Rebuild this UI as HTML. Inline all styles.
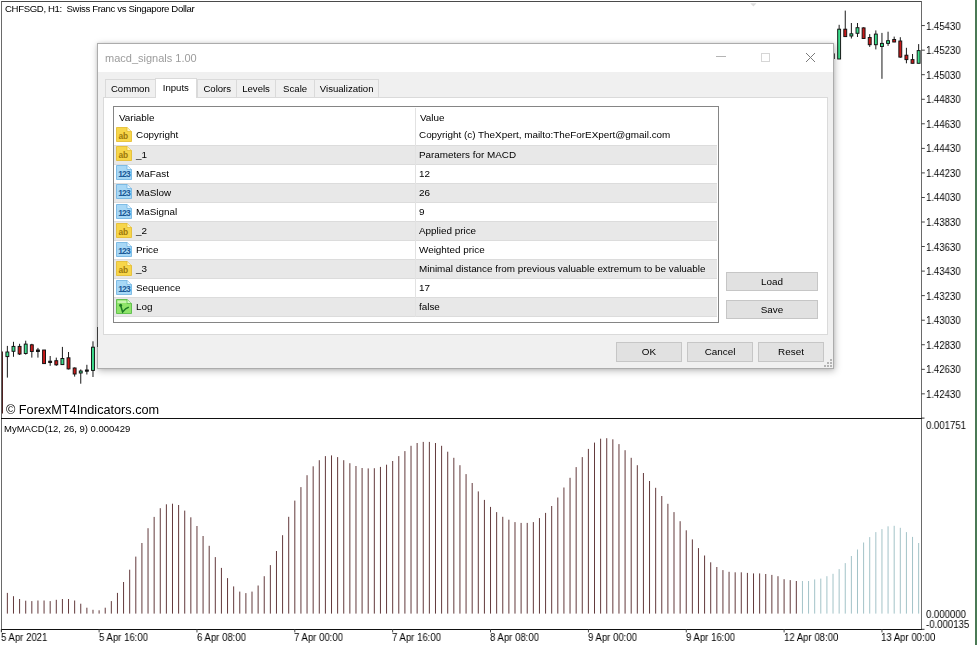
<!DOCTYPE html>
<html><head><meta charset="utf-8"><style>
*{box-sizing:border-box}
html,body{margin:0;padding:0;width:977px;height:645px;overflow:hidden;background:#fff;position:relative;font-family:"Liberation Sans",sans-serif}
.ax{position:absolute;font-size:10.3px;line-height:12px;color:#000;white-space:pre;transform:scaleX(0.93);transform-origin:0 0;will-change:transform}
.t{position:absolute;white-space:pre;line-height:1;will-change:transform}
#dlg{position:absolute;left:97px;top:43px;width:737px;height:325px;background:#f0f0f0;border:1px solid #9a9a9a;box-shadow:0 0 14px rgba(0,0,0,0.28)}
#title{position:absolute;left:0;top:0;width:735px;height:28px;background:#fff}
.tab{position:absolute;top:35.5px;height:19px;background:#f0f0f0;border:1px solid #d9d9d9;border-bottom:none;font-size:9.6px;color:#000;text-align:center;line-height:18px}
.tab.sel{top:34px;height:21px;background:#fff;border-color:#d9d9d9;z-index:2}
#panel{position:absolute;left:6px;top:53.5px;width:724px;height:238px;background:#fff;border:1px solid #d9d9d9}
#tbl{position:absolute;left:9px;top:9px;width:606px;height:216px;border:1px solid #828282;background:#fff;overflow:hidden}
.row{position:absolute;left:1px;width:602px;height:19.1px;font-size:9.9px;color:#000}
.row.g{background:#e9e9e9;border-top:1px solid #dadada;border-bottom:1px solid #dadada}
.btn{position:absolute;background:#e1e1e1;border:1px solid #adadad;font-size:9.9px;color:#000;text-align:center}

.d{position:absolute;z-index:10}
.ic{position:absolute;z-index:11}
.tab{will-change:transform;background:#f0f0f0;border:1px solid #dadada;border-bottom:none;font-size:9.6px;color:#000;text-align:center;z-index:11}
.rt{font-size:9.9px;color:#000;z-index:11}
.btn{will-change:transform;background:#e1e1e1;border:1px solid #c6c6c6;font-size:9.9px;color:#000;text-align:center;z-index:11}
</style></head><body>
<svg width="977" height="645" style="position:absolute;left:0;top:0"><rect x="6.86" y="592.9" width="1" height="20.7" fill="#633a3c"/><rect x="12.98" y="596.2" width="1" height="17.4" fill="#633a3c"/><rect x="19.09" y="599.0" width="1" height="14.6" fill="#633a3c"/><rect x="25.21" y="600.7" width="1" height="12.9" fill="#633a3c"/><rect x="31.32" y="601.1" width="1" height="12.5" fill="#633a3c"/><rect x="37.44" y="600.5" width="1" height="13.1" fill="#633a3c"/><rect x="43.56" y="600.5" width="1" height="13.1" fill="#633a3c"/><rect x="49.67" y="601.1" width="1" height="12.5" fill="#633a3c"/><rect x="55.79" y="599.8" width="1" height="13.8" fill="#633a3c"/><rect x="61.90" y="599.0" width="1" height="14.6" fill="#633a3c"/><rect x="68.02" y="599.0" width="1" height="14.6" fill="#633a3c"/><rect x="74.14" y="600.5" width="1" height="13.1" fill="#633a3c"/><rect x="80.25" y="603.7" width="1" height="9.9" fill="#633a3c"/><rect x="86.37" y="607.7" width="1" height="5.9" fill="#633a3c"/><rect x="92.48" y="609.8" width="1" height="3.8" fill="#633a3c"/><rect x="98.60" y="610.3" width="1" height="3.3" fill="#633a3c"/><rect x="104.72" y="607.7" width="1" height="5.9" fill="#633a3c"/><rect x="110.83" y="601.1" width="1" height="12.5" fill="#633a3c"/><rect x="116.95" y="592.9" width="1" height="20.7" fill="#633a3c"/><rect x="123.06" y="582.0" width="1" height="31.6" fill="#633a3c"/><rect x="129.18" y="569.7" width="1" height="43.9" fill="#633a3c"/><rect x="135.30" y="556.6" width="1" height="57.0" fill="#633a3c"/><rect x="141.41" y="543.0" width="1" height="70.6" fill="#633a3c"/><rect x="147.53" y="528.2" width="1" height="85.4" fill="#633a3c"/><rect x="153.64" y="516.9" width="1" height="96.7" fill="#633a3c"/><rect x="159.76" y="508.2" width="1" height="105.4" fill="#633a3c"/><rect x="165.88" y="504.3" width="1" height="109.3" fill="#633a3c"/><rect x="171.99" y="503.7" width="1" height="109.9" fill="#633a3c"/><rect x="178.11" y="505.0" width="1" height="108.6" fill="#633a3c"/><rect x="184.22" y="510.6" width="1" height="103.0" fill="#633a3c"/><rect x="190.34" y="517.3" width="1" height="96.3" fill="#633a3c"/><rect x="196.46" y="526.0" width="1" height="87.6" fill="#633a3c"/><rect x="202.57" y="536.0" width="1" height="77.6" fill="#633a3c"/><rect x="208.69" y="545.8" width="1" height="67.8" fill="#633a3c"/><rect x="214.80" y="557.1" width="1" height="56.5" fill="#633a3c"/><rect x="220.92" y="567.9" width="1" height="45.7" fill="#633a3c"/><rect x="227.04" y="578.1" width="1" height="35.5" fill="#633a3c"/><rect x="233.15" y="586.4" width="1" height="27.2" fill="#633a3c"/><rect x="239.27" y="591.6" width="1" height="22.0" fill="#633a3c"/><rect x="245.38" y="593.1" width="1" height="20.5" fill="#633a3c"/><rect x="251.50" y="591.6" width="1" height="22.0" fill="#633a3c"/><rect x="257.62" y="585.5" width="1" height="28.1" fill="#633a3c"/><rect x="263.73" y="576.2" width="1" height="37.4" fill="#633a3c"/><rect x="269.85" y="565.1" width="1" height="48.5" fill="#633a3c"/><rect x="275.96" y="551.0" width="1" height="62.6" fill="#633a3c"/><rect x="282.08" y="535.2" width="1" height="78.4" fill="#633a3c"/><rect x="288.20" y="516.8" width="1" height="96.8" fill="#633a3c"/><rect x="294.31" y="500.6" width="1" height="113.0" fill="#633a3c"/><rect x="300.43" y="487.1" width="1" height="126.5" fill="#633a3c"/><rect x="306.54" y="475.2" width="1" height="138.4" fill="#633a3c"/><rect x="312.66" y="466.3" width="1" height="147.3" fill="#633a3c"/><rect x="318.78" y="460.2" width="1" height="153.4" fill="#633a3c"/><rect x="324.89" y="456.1" width="1" height="157.5" fill="#633a3c"/><rect x="331.01" y="455.4" width="1" height="158.2" fill="#633a3c"/><rect x="337.12" y="457.1" width="1" height="156.5" fill="#633a3c"/><rect x="343.24" y="460.2" width="1" height="153.4" fill="#633a3c"/><rect x="349.36" y="463.2" width="1" height="150.4" fill="#633a3c"/><rect x="355.47" y="466.0" width="1" height="147.6" fill="#633a3c"/><rect x="361.59" y="468.0" width="1" height="145.6" fill="#633a3c"/><rect x="367.70" y="468.4" width="1" height="145.2" fill="#633a3c"/><rect x="373.82" y="468.2" width="1" height="145.4" fill="#633a3c"/><rect x="379.94" y="466.9" width="1" height="146.7" fill="#633a3c"/><rect x="386.05" y="464.7" width="1" height="148.9" fill="#633a3c"/><rect x="392.17" y="461.0" width="1" height="152.6" fill="#633a3c"/><rect x="398.28" y="456.1" width="1" height="157.5" fill="#633a3c"/><rect x="404.40" y="451.1" width="1" height="162.5" fill="#633a3c"/><rect x="410.52" y="445.8" width="1" height="167.8" fill="#633a3c"/><rect x="416.63" y="443.0" width="1" height="170.6" fill="#633a3c"/><rect x="422.75" y="441.9" width="1" height="171.7" fill="#633a3c"/><rect x="428.86" y="441.9" width="1" height="171.7" fill="#633a3c"/><rect x="434.98" y="443.0" width="1" height="170.6" fill="#633a3c"/><rect x="441.10" y="445.8" width="1" height="167.8" fill="#633a3c"/><rect x="447.21" y="451.7" width="1" height="161.9" fill="#633a3c"/><rect x="453.33" y="457.8" width="1" height="155.8" fill="#633a3c"/><rect x="459.44" y="465.2" width="1" height="148.4" fill="#633a3c"/><rect x="465.56" y="474.1" width="1" height="139.5" fill="#633a3c"/><rect x="471.68" y="483.0" width="1" height="130.6" fill="#633a3c"/><rect x="477.79" y="491.4" width="1" height="122.2" fill="#633a3c"/><rect x="483.91" y="499.9" width="1" height="113.7" fill="#633a3c"/><rect x="490.02" y="506.9" width="1" height="106.7" fill="#633a3c"/><rect x="496.14" y="512.1" width="1" height="101.5" fill="#633a3c"/><rect x="502.26" y="516.8" width="1" height="96.8" fill="#633a3c"/><rect x="508.37" y="519.7" width="1" height="93.9" fill="#633a3c"/><rect x="514.49" y="522.1" width="1" height="91.5" fill="#633a3c"/><rect x="520.60" y="522.9" width="1" height="90.7" fill="#633a3c"/><rect x="526.72" y="522.9" width="1" height="90.7" fill="#633a3c"/><rect x="532.84" y="522.1" width="1" height="91.5" fill="#633a3c"/><rect x="538.95" y="518.1" width="1" height="95.5" fill="#633a3c"/><rect x="545.07" y="512.9" width="1" height="100.7" fill="#633a3c"/><rect x="551.18" y="506.0" width="1" height="107.6" fill="#633a3c"/><rect x="557.30" y="497.5" width="1" height="116.1" fill="#633a3c"/><rect x="563.42" y="487.5" width="1" height="126.1" fill="#633a3c"/><rect x="569.53" y="477.8" width="1" height="135.8" fill="#633a3c"/><rect x="575.65" y="467.1" width="1" height="146.5" fill="#633a3c"/><rect x="581.76" y="457.1" width="1" height="156.5" fill="#633a3c"/><rect x="587.88" y="448.9" width="1" height="164.7" fill="#633a3c"/><rect x="594.00" y="442.6" width="1" height="171.0" fill="#633a3c"/><rect x="600.11" y="438.7" width="1" height="174.9" fill="#633a3c"/><rect x="606.23" y="438.2" width="1" height="175.4" fill="#633a3c"/><rect x="612.34" y="439.3" width="1" height="174.3" fill="#633a3c"/><rect x="618.46" y="444.1" width="1" height="169.5" fill="#633a3c"/><rect x="624.58" y="450.2" width="1" height="163.4" fill="#633a3c"/><rect x="630.69" y="457.8" width="1" height="155.8" fill="#633a3c"/><rect x="636.81" y="465.2" width="1" height="148.4" fill="#633a3c"/><rect x="642.92" y="473.0" width="1" height="140.6" fill="#633a3c"/><rect x="649.04" y="481.0" width="1" height="132.6" fill="#633a3c"/><rect x="655.16" y="487.8" width="1" height="125.8" fill="#633a3c"/><rect x="661.27" y="496.0" width="1" height="117.6" fill="#633a3c"/><rect x="667.39" y="503.8" width="1" height="109.8" fill="#633a3c"/><rect x="673.50" y="512.1" width="1" height="101.5" fill="#633a3c"/><rect x="679.62" y="521.2" width="1" height="92.4" fill="#633a3c"/><rect x="685.74" y="530.3" width="1" height="83.3" fill="#633a3c"/><rect x="691.85" y="539.4" width="1" height="74.2" fill="#633a3c"/><rect x="697.97" y="548.1" width="1" height="65.5" fill="#633a3c"/><rect x="704.08" y="555.5" width="1" height="58.1" fill="#633a3c"/><rect x="710.20" y="562.3" width="1" height="51.3" fill="#633a3c"/><rect x="716.32" y="567.0" width="1" height="46.6" fill="#633a3c"/><rect x="722.43" y="570.1" width="1" height="43.5" fill="#633a3c"/><rect x="728.55" y="571.8" width="1" height="41.8" fill="#633a3c"/><rect x="734.66" y="572.3" width="1" height="41.3" fill="#633a3c"/><rect x="740.78" y="572.3" width="1" height="41.3" fill="#633a3c"/><rect x="746.90" y="572.9" width="1" height="40.7" fill="#633a3c"/><rect x="753.01" y="573.4" width="1" height="40.2" fill="#633a3c"/><rect x="759.13" y="573.4" width="1" height="40.2" fill="#633a3c"/><rect x="765.24" y="574.0" width="1" height="39.6" fill="#633a3c"/><rect x="771.36" y="574.9" width="1" height="38.7" fill="#633a3c"/><rect x="777.48" y="576.2" width="1" height="37.4" fill="#633a3c"/><rect x="783.59" y="579.2" width="1" height="34.4" fill="#633a3c"/><rect x="789.71" y="580.1" width="1" height="33.5" fill="#633a3c"/><rect x="795.82" y="581.0" width="1" height="32.6" fill="#633a3c"/><rect x="801.94" y="581.0" width="1" height="32.6" fill="#a3c3c8"/><rect x="808.06" y="581.0" width="1" height="32.6" fill="#a3c3c8"/><rect x="814.17" y="579.4" width="1" height="34.2" fill="#a3c3c8"/><rect x="820.29" y="578.6" width="1" height="35.0" fill="#a3c3c8"/><rect x="826.40" y="576.2" width="1" height="37.4" fill="#a3c3c8"/><rect x="832.52" y="573.8" width="1" height="39.8" fill="#a3c3c8"/><rect x="838.64" y="569.1" width="1" height="44.5" fill="#a3c3c8"/><rect x="844.75" y="563.1" width="1" height="50.5" fill="#a3c3c8"/><rect x="850.87" y="556.0" width="1" height="57.6" fill="#a3c3c8"/><rect x="856.98" y="549.5" width="1" height="64.1" fill="#a3c3c8"/><rect x="863.10" y="542.5" width="1" height="71.1" fill="#a3c3c8"/><rect x="869.22" y="537.1" width="1" height="76.5" fill="#a3c3c8"/><rect x="875.33" y="532.1" width="1" height="81.5" fill="#a3c3c8"/><rect x="881.45" y="529.1" width="1" height="84.5" fill="#a3c3c8"/><rect x="887.56" y="526.3" width="1" height="87.3" fill="#a3c3c8"/><rect x="893.68" y="525.8" width="1" height="87.8" fill="#a3c3c8"/><rect x="899.80" y="527.8" width="1" height="85.8" fill="#a3c3c8"/><rect x="905.91" y="532.1" width="1" height="81.5" fill="#a3c3c8"/><rect x="912.03" y="536.9" width="1" height="76.7" fill="#a3c3c8"/><rect x="918.14" y="543.0" width="1" height="70.6" fill="#a3c3c8"/><rect x="6.86" y="345.9" width="1" height="31.7" fill="#1a1a1a"/><rect x="5.91" y="352" width="2.9" height="4.6" fill="#3ee08e" stroke="#111" stroke-width="0.95"/><rect x="12.98" y="341.8" width="1" height="15.0" fill="#1a1a1a"/><rect x="12.03" y="346.4" width="2.9" height="4.9" fill="#3ee08e" stroke="#111" stroke-width="0.95"/><rect x="19.09" y="343.8" width="1" height="11.2" fill="#1a1a1a"/><rect x="18.14" y="346.4" width="2.9" height="7.6" fill="#c81a1a" stroke="#111" stroke-width="0.95"/><rect x="25.21" y="340.7" width="1" height="13.9" fill="#1a1a1a"/><rect x="24.26" y="344.1" width="2.9" height="9.4" fill="#3ee08e" stroke="#111" stroke-width="0.95"/><rect x="31.32" y="343.8" width="1" height="13.8" fill="#1a1a1a"/><rect x="30.37" y="344.8" width="2.9" height="6.7" fill="#c81a1a" stroke="#111" stroke-width="0.95"/><rect x="37.44" y="347.9" width="1" height="9.7" fill="#1a1a1a"/><rect x="36.49" y="350" width="2.9" height="1.5" fill="#1a1a1a" stroke="#111" stroke-width="0.95"/><rect x="43.56" y="350" width="1" height="13.6" fill="#1a1a1a"/><rect x="42.61" y="350" width="2.9" height="13.6" fill="#c81a1a" stroke="#111" stroke-width="0.95"/><rect x="49.67" y="356" width="1" height="9.8" fill="#1a1a1a"/><rect x="48.72" y="361.2" width="2.9" height="1.3" fill="#1a1a1a" stroke="#111" stroke-width="0.95"/><rect x="55.79" y="357.6" width="1" height="8.2" fill="#1a1a1a"/><rect x="54.84" y="360.7" width="2.9" height="4.1" fill="#c81a1a" stroke="#111" stroke-width="0.95"/><rect x="61.90" y="346.9" width="1" height="17.9" fill="#1a1a1a"/><rect x="60.95" y="358.5" width="2.9" height="6.1" fill="#3ee08e" stroke="#111" stroke-width="0.95"/><rect x="68.02" y="352" width="1" height="17.4" fill="#1a1a1a"/><rect x="67.07" y="357.8" width="2.9" height="11.1" fill="#c81a1a" stroke="#111" stroke-width="0.95"/><rect x="74.14" y="367.4" width="1" height="9.2" fill="#1a1a1a"/><rect x="73.19" y="368" width="2.9" height="6.0" fill="#c81a1a" stroke="#111" stroke-width="0.95"/><rect x="80.25" y="369.4" width="1" height="14.3" fill="#1a1a1a"/><rect x="79.30" y="371" width="2.9" height="2.0" fill="#3ee08e" stroke="#111" stroke-width="0.95"/><rect x="86.37" y="364.8" width="1" height="9.7" fill="#1a1a1a"/><rect x="85.42" y="370" width="2.9" height="1.2" fill="#1a1a1a" stroke="#111" stroke-width="0.95"/><rect x="92.48" y="341.3" width="1" height="35.7" fill="#1a1a1a"/><rect x="91.53" y="347.2" width="2.9" height="23.2" fill="#3ee08e" stroke="#111" stroke-width="0.95"/><rect x="98.60" y="320" width="1" height="30.0" fill="#1a1a1a"/><rect x="97.65" y="330" width="2.9" height="16.0" fill="#3ee08e" stroke="#111" stroke-width="0.95"/><rect x="838.64" y="24.8" width="1" height="34.2" fill="#1a1a1a"/><rect x="837.69" y="29.2" width="2.9" height="29.8" fill="#3ee08e" stroke="#111" stroke-width="0.95"/><rect x="844.75" y="10.6" width="1" height="26.0" fill="#1a1a1a"/><rect x="843.80" y="29.2" width="2.9" height="7.4" fill="#c81a1a" stroke="#111" stroke-width="0.95"/><rect x="850.87" y="23" width="1" height="15.5" fill="#1a1a1a"/><rect x="849.92" y="33.8" width="2.9" height="2.2" fill="#3ee08e" stroke="#111" stroke-width="0.95"/><rect x="856.98" y="23" width="1" height="14.0" fill="#1a1a1a"/><rect x="856.03" y="27.7" width="2.9" height="5.6" fill="#3ee08e" stroke="#111" stroke-width="0.95"/><rect x="863.10" y="27.3" width="1" height="11.2" fill="#1a1a1a"/><rect x="862.15" y="27.9" width="2.9" height="10.6" fill="#c81a1a" stroke="#111" stroke-width="0.95"/><rect x="869.22" y="34.1" width="1" height="12.8" fill="#1a1a1a"/><rect x="868.27" y="37.5" width="2.9" height="7.2" fill="#c81a1a" stroke="#111" stroke-width="0.95"/><rect x="875.33" y="30.4" width="1" height="19.0" fill="#1a1a1a"/><rect x="874.38" y="34.1" width="2.9" height="10.6" fill="#3ee08e" stroke="#111" stroke-width="0.95"/><rect x="881.45" y="32.9" width="1" height="45.9" fill="#1a1a1a"/><rect x="880.50" y="43.4" width="2.9" height="3.1" fill="#3ee08e" stroke="#111" stroke-width="0.95"/><rect x="887.56" y="31.7" width="1" height="14.2" fill="#1a1a1a"/><rect x="886.61" y="40.7" width="2.9" height="2.7" fill="#3ee08e" stroke="#111" stroke-width="0.95"/><rect x="893.68" y="36.6" width="1" height="5.6" fill="#1a1a1a"/><rect x="892.73" y="39.5" width="2.9" height="2.5" fill="#c81a1a" stroke="#111" stroke-width="0.95"/><rect x="899.80" y="37.2" width="1" height="20.5" fill="#1a1a1a"/><rect x="898.85" y="41" width="2.9" height="16.1" fill="#c81a1a" stroke="#111" stroke-width="0.95"/><rect x="905.91" y="47.8" width="1" height="15.5" fill="#1a1a1a"/><rect x="904.96" y="55.2" width="2.9" height="4.4" fill="#c81a1a" stroke="#111" stroke-width="0.95"/><rect x="912.03" y="54" width="1" height="9.3" fill="#1a1a1a"/><rect x="911.08" y="59.6" width="2.9" height="3.7" fill="#c81a1a" stroke="#111" stroke-width="0.95"/><rect x="918.14" y="44.1" width="1" height="19.2" fill="#1a1a1a"/><rect x="917.19" y="50.6" width="2.9" height="12.7" fill="#3ee08e" stroke="#111" stroke-width="0.95"/><rect x="1.5" y="351.5" width="1.4" height="62" fill="#3a0808"/><rect x="833.6" y="53.4" width="1.2" height="5.6" fill="#222"/><rect x="1" y="1" width="920.5" height="1" fill="#4a4a4a"/><path d="M750.3 3.2H756.5L753.4 6.4Z" fill="#dcdcdc"/><rect x="1" y="1" width="0.9" height="631" fill="#5a5a5a"/><rect x="921" y="1" width="0.9" height="629" fill="#5a5a5a"/><rect x="1" y="418" width="921" height="1" fill="#111"/><rect x="1" y="629" width="921" height="1" fill="#111"/><rect x="921.5" y="25.15" width="3.3" height="0.9" fill="#333"/><rect x="921.5" y="49.70" width="3.3" height="0.9" fill="#333"/><rect x="921.5" y="74.25" width="3.3" height="0.9" fill="#333"/><rect x="921.5" y="98.80" width="3.3" height="0.9" fill="#333"/><rect x="921.5" y="123.35" width="3.3" height="0.9" fill="#333"/><rect x="921.5" y="147.90" width="3.3" height="0.9" fill="#333"/><rect x="921.5" y="172.45" width="3.3" height="0.9" fill="#333"/><rect x="921.5" y="197.00" width="3.3" height="0.9" fill="#333"/><rect x="921.5" y="221.55" width="3.3" height="0.9" fill="#333"/><rect x="921.5" y="246.10" width="3.3" height="0.9" fill="#333"/><rect x="921.5" y="270.65" width="3.3" height="0.9" fill="#333"/><rect x="921.5" y="295.20" width="3.3" height="0.9" fill="#333"/><rect x="921.5" y="319.75" width="3.3" height="0.9" fill="#333"/><rect x="921.5" y="344.30" width="3.3" height="0.9" fill="#333"/><rect x="921.5" y="368.85" width="3.3" height="0.9" fill="#333"/><rect x="921.5" y="393.40" width="3.3" height="0.9" fill="#333"/><rect x="921.5" y="417.6" width="3" height="1" fill="#333"/><rect x="921.5" y="628.8" width="3" height="1" fill="#333"/><rect x="0.85" y="629" width="0.9" height="3.4" fill="#333"/><rect x="98.65" y="629" width="0.9" height="3.4" fill="#333"/><rect x="196.51" y="629" width="0.9" height="3.4" fill="#333"/><rect x="294.36" y="629" width="0.9" height="3.4" fill="#333"/><rect x="392.22" y="629" width="0.9" height="3.4" fill="#333"/><rect x="490.07" y="629" width="0.9" height="3.4" fill="#333"/><rect x="587.93" y="629" width="0.9" height="3.4" fill="#333"/><rect x="685.79" y="629" width="0.9" height="3.4" fill="#333"/><rect x="783.64" y="629" width="0.9" height="3.4" fill="#333"/><rect x="881.50" y="629" width="0.9" height="3.4" fill="#333"/></svg>
<div class="t" style="left:5px;top:3.6px;font-size:9.6px;color:#000;letter-spacing:-0.35px">CHFSGD, H1:  Swiss Franc vs Singapore Dollar</div>
<div class="t" style="left:6.3px;top:403.6px;font-size:12.7px;color:#000">&copy; ForexMT4Indicators.com</div>
<div class="t" style="left:3.5px;top:423.8px;font-size:9.5px;color:#000">MyMACD(12, 26, 9) 0.000429</div>
<div class="ax" style="left:926px;top:20.6px">1.45430</div><div class="ax" style="left:926px;top:45.2px">1.45230</div><div class="ax" style="left:926px;top:69.7px">1.45030</div><div class="ax" style="left:926px;top:94.2px">1.44830</div><div class="ax" style="left:926px;top:118.8px">1.44630</div><div class="ax" style="left:926px;top:143.3px">1.44430</div><div class="ax" style="left:926px;top:167.9px">1.44230</div><div class="ax" style="left:926px;top:192.4px">1.44030</div><div class="ax" style="left:926px;top:217.0px">1.43830</div><div class="ax" style="left:926px;top:241.6px">1.43630</div><div class="ax" style="left:926px;top:266.1px">1.43430</div><div class="ax" style="left:926px;top:290.7px">1.43230</div><div class="ax" style="left:926px;top:315.2px">1.43030</div><div class="ax" style="left:926px;top:339.8px">1.42830</div><div class="ax" style="left:926px;top:364.3px">1.42630</div><div class="ax" style="left:926px;top:388.9px">1.42430</div><div class="ax" style="left:0.7px;top:632.3px">5 Apr 2021</div><div class="ax" style="left:98.6px;top:632.3px">5 Apr 16:00</div><div class="ax" style="left:196.5px;top:632.3px">6 Apr 08:00</div><div class="ax" style="left:294.3px;top:632.3px">7 Apr 00:00</div><div class="ax" style="left:392.2px;top:632.3px">7 Apr 16:00</div><div class="ax" style="left:490.0px;top:632.3px">8 Apr 08:00</div><div class="ax" style="left:587.9px;top:632.3px">9 Apr 00:00</div><div class="ax" style="left:685.7px;top:632.3px">9 Apr 16:00</div><div class="ax" style="left:783.6px;top:632.3px">12 Apr 08:00</div><div class="ax" style="left:881.4px;top:632.3px">13 Apr 00:00</div><div class="ax" style="left:926px;top:420.4px">0.001751</div><div class="ax" style="left:926px;top:609px">0.000000</div><div class="ax" style="left:925.5px;top:619px">-0.000135</div>
<div class="d" style="left:97px;top:43px;width:737px;height:326px;background:#f0f0f0;border:1px solid #acacac;box-shadow:1px 2px 7px rgba(0,0,0,0.26), 0 0 3px rgba(0,0,0,0.10)"></div><div class="d" style="left:98px;top:44px;width:735px;height:28px;background:#fff"></div><div class="d t" style="left:105px;top:52.6px;font-size:11px;color:#9c9c9c">macd_signals 1.00</div><div class="d" style="left:716px;top:56px;width:10px;height:1.3px;background:#b4b4b4"></div><div class="d" style="left:761px;top:52.6px;width:9px;height:9px;border:1px solid #d6d6d6"></div><svg class="d" style="left:805px;top:51.6px" width="11" height="11" viewBox="0 0 11 11"><path d="M1 1L10 10M10 1L1 10" stroke="#7a7a7a" stroke-width="1"/></svg><div class="d" style="left:103px;top:97px;width:725px;height:238px;background:#fff;border:1px solid #dadada"></div><div class="d tab" style="left:105.2px;top:79.4px;width:50.7px;height:18.4px;line-height:17.6px">Common</div><div class="d tab" style="left:154.9px;top:78px;width:41.6px;height:20px;background:#fff;z-index:12;line-height:17px">Inputs</div><div class="d tab" style="left:196.5px;top:79.4px;width:40.5px;height:18.4px;line-height:17.6px">Colors</div><div class="d tab" style="left:236.0px;top:79.4px;width:40.1px;height:18.4px;line-height:17.6px">Levels</div><div class="d tab" style="left:275.1px;top:79.4px;width:40.2px;height:18.4px;line-height:17.6px">Scale</div><div class="d tab" style="left:314.3px;top:79.4px;width:65.3px;height:18.4px;line-height:17.6px">Visualization</div><div class="d" style="left:113px;top:106px;width:606px;height:217px;background:#fff;border:1px solid #858585"></div><svg class="ic" style="left:116.2px;top:127.2px" width="16" height="15" viewBox="0 0 16 15"><path d="M0.5 0.5H11L15.5 4.5V14.5H0.5Z" fill="#f7d64a" stroke="#e2b92a" stroke-width="0.8"/><path d="M11 0.5V4.5H15.5" fill="#fff3b8" stroke="#e2b92a" stroke-width="0.7"/><text x="2.4" y="11.6" font-family="Liberation Sans" font-weight="bold" font-size="8.4" fill="#9c780a">ab</text></svg><div class="d t rt" style="left:135.5px;top:130.4px">Copyright</div><div class="d t rt" style="left:419.3px;top:130.4px">Copyright (c) TheXpert, mailto:TheForEXpert@gmail.com</div><div class="d" style="left:114px;top:145px;width:603px;height:20px;background:#e8e8e8;border-top:1px solid #dcdcdc;border-bottom:1px solid #dcdcdc"></div><svg class="ic" style="left:116.2px;top:146.3px" width="16" height="15" viewBox="0 0 16 15"><path d="M0.5 0.5H11L15.5 4.5V14.5H0.5Z" fill="#f7d64a" stroke="#e2b92a" stroke-width="0.8"/><path d="M11 0.5V4.5H15.5" fill="#fff3b8" stroke="#e2b92a" stroke-width="0.7"/><text x="2.4" y="11.6" font-family="Liberation Sans" font-weight="bold" font-size="8.4" fill="#9c780a">ab</text></svg><div class="d t rt" style="left:135.5px;top:149.5px">_1</div><div class="d t rt" style="left:419.3px;top:149.5px">Parameters for MACD</div><svg class="ic" style="left:116.2px;top:165.4px" width="16" height="15" viewBox="0 0 16 15"><path d="M0.5 0.5H11L15.5 4.5V14.5H0.5Z" fill="#a8d8f6" stroke="#6ab0e0" stroke-width="0.8"/><path d="M11 0.5V4.5H15.5" fill="#e4f4ff" stroke="#6ab0e0" stroke-width="0.7"/><text x="2.2" y="11.9" font-family="Liberation Sans" font-weight="bold" font-size="8.6" fill="#1c5a98" letter-spacing="-0.9">123</text></svg><div class="d t rt" style="left:135.5px;top:168.6px">MaFast</div><div class="d t rt" style="left:419.3px;top:168.6px">12</div><div class="d" style="left:114px;top:183px;width:603px;height:20px;background:#e8e8e8;border-top:1px solid #dcdcdc;border-bottom:1px solid #dcdcdc"></div><svg class="ic" style="left:116.2px;top:184.4px" width="16" height="15" viewBox="0 0 16 15"><path d="M0.5 0.5H11L15.5 4.5V14.5H0.5Z" fill="#a8d8f6" stroke="#6ab0e0" stroke-width="0.8"/><path d="M11 0.5V4.5H15.5" fill="#e4f4ff" stroke="#6ab0e0" stroke-width="0.7"/><text x="2.2" y="11.9" font-family="Liberation Sans" font-weight="bold" font-size="8.6" fill="#1c5a98" letter-spacing="-0.9">123</text></svg><div class="d t rt" style="left:135.5px;top:187.6px">MaSlow</div><div class="d t rt" style="left:419.3px;top:187.6px">26</div><svg class="ic" style="left:116.2px;top:203.5px" width="16" height="15" viewBox="0 0 16 15"><path d="M0.5 0.5H11L15.5 4.5V14.5H0.5Z" fill="#a8d8f6" stroke="#6ab0e0" stroke-width="0.8"/><path d="M11 0.5V4.5H15.5" fill="#e4f4ff" stroke="#6ab0e0" stroke-width="0.7"/><text x="2.2" y="11.9" font-family="Liberation Sans" font-weight="bold" font-size="8.6" fill="#1c5a98" letter-spacing="-0.9">123</text></svg><div class="d t rt" style="left:135.5px;top:206.7px">MaSignal</div><div class="d t rt" style="left:419.3px;top:206.7px">9</div><div class="d" style="left:114px;top:221px;width:603px;height:20px;background:#e8e8e8;border-top:1px solid #dcdcdc;border-bottom:1px solid #dcdcdc"></div><svg class="ic" style="left:116.2px;top:222.6px" width="16" height="15" viewBox="0 0 16 15"><path d="M0.5 0.5H11L15.5 4.5V14.5H0.5Z" fill="#f7d64a" stroke="#e2b92a" stroke-width="0.8"/><path d="M11 0.5V4.5H15.5" fill="#fff3b8" stroke="#e2b92a" stroke-width="0.7"/><text x="2.4" y="11.6" font-family="Liberation Sans" font-weight="bold" font-size="8.4" fill="#9c780a">ab</text></svg><div class="d t rt" style="left:135.5px;top:225.8px">_2</div><div class="d t rt" style="left:419.3px;top:225.8px">Applied price</div><svg class="ic" style="left:116.2px;top:241.7px" width="16" height="15" viewBox="0 0 16 15"><path d="M0.5 0.5H11L15.5 4.5V14.5H0.5Z" fill="#a8d8f6" stroke="#6ab0e0" stroke-width="0.8"/><path d="M11 0.5V4.5H15.5" fill="#e4f4ff" stroke="#6ab0e0" stroke-width="0.7"/><text x="2.2" y="11.9" font-family="Liberation Sans" font-weight="bold" font-size="8.6" fill="#1c5a98" letter-spacing="-0.9">123</text></svg><div class="d t rt" style="left:135.5px;top:244.9px">Price</div><div class="d t rt" style="left:419.3px;top:244.9px">Weighted price</div><div class="d" style="left:114px;top:259px;width:603px;height:20px;background:#e8e8e8;border-top:1px solid #dcdcdc;border-bottom:1px solid #dcdcdc"></div><svg class="ic" style="left:116.2px;top:260.8px" width="16" height="15" viewBox="0 0 16 15"><path d="M0.5 0.5H11L15.5 4.5V14.5H0.5Z" fill="#f7d64a" stroke="#e2b92a" stroke-width="0.8"/><path d="M11 0.5V4.5H15.5" fill="#fff3b8" stroke="#e2b92a" stroke-width="0.7"/><text x="2.4" y="11.6" font-family="Liberation Sans" font-weight="bold" font-size="8.4" fill="#9c780a">ab</text></svg><div class="d t rt" style="left:135.5px;top:264.0px">_3</div><div class="d t rt" style="left:419.3px;top:264.0px">Minimal distance from previous valuable extremum to be valuable</div><svg class="ic" style="left:116.2px;top:279.8px" width="16" height="15" viewBox="0 0 16 15"><path d="M0.5 0.5H11L15.5 4.5V14.5H0.5Z" fill="#a8d8f6" stroke="#6ab0e0" stroke-width="0.8"/><path d="M11 0.5V4.5H15.5" fill="#e4f4ff" stroke="#6ab0e0" stroke-width="0.7"/><text x="2.2" y="11.9" font-family="Liberation Sans" font-weight="bold" font-size="8.6" fill="#1c5a98" letter-spacing="-0.9">123</text></svg><div class="d t rt" style="left:135.5px;top:283.0px">Sequence</div><div class="d t rt" style="left:419.3px;top:283.0px">17</div><div class="d" style="left:114px;top:297px;width:603px;height:20px;background:#e8e8e8;border-top:1px solid #dcdcdc;border-bottom:1px solid #dcdcdc"></div><svg class="ic" style="left:116.2px;top:298.9px" width="16" height="15" viewBox="0 0 16 15"><path d="M0.5 0.5H11L15.5 4.5V14.5H0.5Z" fill="#8fe46a" stroke="#4cb83a" stroke-width="0.8"/><path d="M11 0.5V4.5H15.5" fill="#d8f8c8" stroke="#4cb83a" stroke-width="0.7"/><rect x="1.5" y="1.6" width="9" height="2.4" fill="#c8f4b0"/><path d="M4.6 6.2L6.6 13L9.6 9.8L12.8 8.2" fill="none" stroke="#1c7a24" stroke-width="1.5"/><circle cx="4.6" cy="6.2" r="1.5" fill="#1c7a24"/></svg><div class="d t rt" style="left:135.5px;top:302.1px">Log</div><div class="d t rt" style="left:419.3px;top:302.1px">false</div><div class="d t rt" style="left:119.3px;top:112.8px">Variable</div><div class="d t rt" style="left:420.3px;top:112.8px">Value</div><div class="d" style="left:415.2px;top:107.5px;width:1px;height:209px;background:#e2e2e2"></div><div class="d btn" style="left:726px;top:271.5px;width:92px;height:19.4px;line-height:17.4px">Load</div><div class="d btn" style="left:726px;top:300.4px;width:92px;height:19.4px;line-height:17.4px">Save</div><div class="d btn" style="left:616px;top:342px;width:66px;height:19.8px;line-height:17.8px">OK</div><div class="d btn" style="left:687px;top:342px;width:66px;height:19.8px;line-height:17.8px">Cancel</div><div class="d btn" style="left:758px;top:342px;width:66px;height:19.8px;line-height:17.8px">Reset</div><div class="d" style="left:97px;top:327px;width:1px;height:19.5px;background:#3a3a3a;z-index:20"></div><div class="d" style="left:830px;top:358.5px;width:2px;height:2px;background:#b4b4b4"></div><div class="d" style="left:827px;top:361.5px;width:2px;height:2px;background:#b4b4b4"></div><div class="d" style="left:830px;top:361.5px;width:2px;height:2px;background:#b4b4b4"></div><div class="d" style="left:824px;top:364.5px;width:2px;height:2px;background:#b4b4b4"></div><div class="d" style="left:827px;top:364.5px;width:2px;height:2px;background:#b4b4b4"></div><div class="d" style="left:830px;top:364.5px;width:2px;height:2px;background:#b4b4b4"></div>
<div style="position:absolute;left:975px;top:0;width:2px;height:645px;background:#4a7a55"></div>
</body></html>
